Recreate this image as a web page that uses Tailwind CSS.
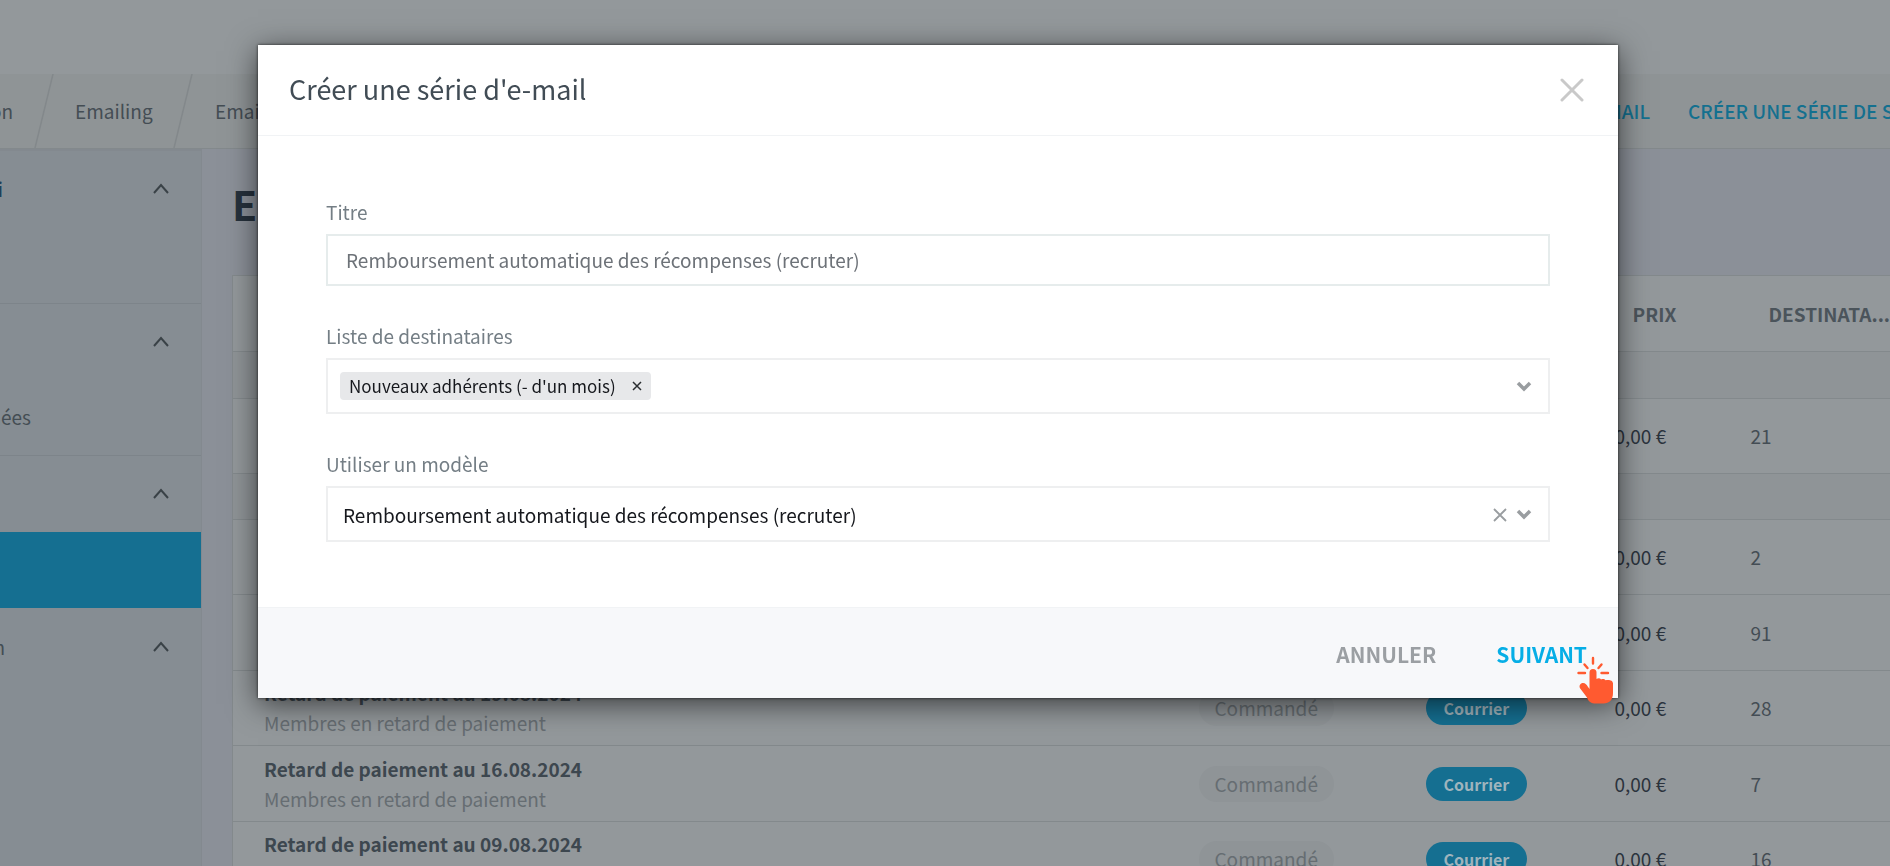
<!DOCTYPE html>
<html lang="fr">
<head>
<meta charset="utf-8">
<title>Créer une série d'e-mail</title>
<script src="https://cdn.jsdelivr.net/npm/@tailwindcss/browser@4"></script>
</head>
<body class="h-screen overflow-hidden bg-[#8b9098] font-['Noto_Sans_CJK_SC',sans-serif] text-[19px] text-[#444d54]">
<div class="flex h-screen flex-col overflow-hidden">
  <header class="h-[74px] shrink-0 bg-[#93989b]"></header>
  <nav class="flex h-[75px] shrink-0 items-stretch justify-between overflow-hidden border-b border-[#83898c] bg-[#8f9496] whitespace-nowrap" aria-label="Fil d'Ariane">
    <div class="flex items-center">
      <div class="flex w-[13px] justify-end overflow-hidden"><a href="#">Communication</a></div>
      <svg class="ml-[21px] h-[74px] w-5" viewBox="0 0 20 74" fill="none" stroke="#83888b" stroke-width="1.5"><path d="M19 0 1 74"/></svg>
      <a href="#" class="ml-[21px] w-[78px]">Emailing</a>
      <svg class="ml-5 h-[74px] w-5" viewBox="0 0 20 74" fill="none" stroke="#83888b" stroke-width="1.5"><path d="M19 0 1 74"/></svg>
      <a href="#" class="ml-[22px]">Emailing</a>
    </div>
    <div class="flex w-[340px] items-center justify-start gap-[38px] font-medium text-[#14708f]">
      <div class="flex w-[100px] shrink-0 justify-end"><a href="#">E-MAIL</a></div>
      <a href="#">CRÉER UNE SÉRIE DE SMS</a>
    </div>
  </nav>
  <div class="flex min-h-0 flex-1">
    <aside class="w-[202px] shrink-0 overflow-hidden border-t-2 border-r border-[#83898f] bg-[#868d93] whitespace-nowrap">
      <section class="h-[153px] border-b border-[#7d848a]">
        <button class="flex h-[76px] w-full items-center justify-between pr-8 font-medium text-[#1f3f58]"><span class="flex w-[3px] justify-end">Envoi</span>
          <svg class="h-4 w-4" viewBox="0 0 16 16" fill="none" stroke="#3a4247" stroke-width="2"><path d="m1 12 7-8 7 8"/></svg></button>
      </section>
      <section class="h-[152px] border-b border-[#7d848a]">
        <button class="flex h-[76px] w-full items-center justify-end pr-8" aria-label="Replier">
          <svg class="h-4 w-4" viewBox="0 0 16 16" fill="none" stroke="#3a4247" stroke-width="2"><path d="m1 12 7-8 7 8"/></svg></button>
        <a href="#" class="flex h-[75px] w-[31px] items-center justify-end">Données</a>
      </section>
      <section class="h-[153px]">
        <button class="flex h-[76px] w-full items-center justify-end pr-8" aria-label="Replier">
          <svg class="h-4 w-4" viewBox="0 0 16 16" fill="none" stroke="#3a4247" stroke-width="2"><path d="m1 12 7-8 7 8"/></svg></button>
        <a href="#" class="block h-[76px] bg-[#156f91]" aria-label="Emailing"></a>
      </section>
      <section>
        <button class="flex h-[76px] w-full items-center justify-between pr-8"><span class="flex w-[5px] justify-end">Configuration</span>
          <svg class="h-4 w-4" viewBox="0 0 16 16" fill="none" stroke="#3a4247" stroke-width="2"><path d="m1 12 7-8 7 8"/></svg></button>
      </section>
    </aside>
    <main class="min-w-0 flex-1 overflow-hidden pl-[30px]">
      <h1 class="flex h-[126px] items-center pb-4 text-[41px] font-bold text-[#26313c]">Emailing</h1>
      <table class="w-[calc(100%+40px)] table-fixed border-collapse border border-[#83898c] bg-[#93989b] text-left leading-[30px]">
        <colgroup><col><col class="w-[227px]"><col class="w-[189px]"><col class="w-[136px]"><col class="w-[211px]"></colgroup>
        <thead>
          <tr class="h-[76px] border-b border-[#83898c] text-[#4b545b]"><th></th><th></th><th></th><th class="pl-[50px] font-bold">PRIX</th><th class="pl-[50px] font-bold">DESTINATA...</th></tr>
        </thead>
        <tbody>
          <tr class="h-[47px] border-b border-[#83898c] bg-[#8f9497]"><td colspan="5"></td></tr>
          <tr class="h-[75px] border-b border-[#83898c]"><td></td><td></td><td></td><td class="pl-8 text-[#2b333d]">0,00 €</td><td class="pl-8">21</td></tr>
          <tr class="h-[46px] border-b border-[#83898c] bg-[#8f9497]"><td colspan="5"></td></tr>
          <tr class="h-[75px] border-b border-[#83898c]"><td></td><td></td><td></td><td class="pl-8 text-[#2b333d]">0,00 €</td><td class="pl-8">2</td></tr>
          <tr class="h-[76px] border-b border-[#83898c]"><td></td><td></td><td></td><td class="pl-8 text-[#2b333d]">0,00 €</td><td class="pl-8">91</td></tr>
          <tr class="h-[75px] border-b border-[#83898c]">
            <td class="pl-[31px]"><div class="font-bold text-[#3d474f]">Retard de paiement au 19.08.2024</div><div class="text-[#666d72]">Membres en retard de paiement</div></td>
            <td class="pl-8"><span class="inline-block rounded-full bg-[#8f9497] px-4 py-[3px] text-[#666d72]">Commandé</span></td>
            <td class="pl-8"><span class="inline-flex h-[34px] items-center rounded-full bg-[#156f91] px-[18px] text-base font-bold text-[#9fb4bd]">Courrier</span></td>
            <td class="pl-8 text-[#2b333d]">0,00 €</td><td class="pl-8">28</td></tr>
          <tr class="h-[76px] border-b border-[#83898c]">
            <td class="pl-[31px]"><div class="font-bold text-[#3d474f]">Retard de paiement au 16.08.2024</div><div class="text-[#666d72]">Membres en retard de paiement</div></td>
            <td class="pl-8"><span class="inline-block rounded-full bg-[#8f9497] px-4 py-[3px] text-[#666d72]">Commandé</span></td>
            <td class="pl-8"><span class="inline-flex h-[34px] items-center rounded-full bg-[#156f91] px-[18px] text-base font-bold text-[#9fb4bd]">Courrier</span></td>
            <td class="pl-8 text-[#2b333d]">0,00 €</td><td class="pl-8">7</td></tr>
          <tr class="h-[75px] border-b border-[#83898c]">
            <td class="pl-[31px]"><div class="font-bold text-[#3d474f]">Retard de paiement au 09.08.2024</div><div class="text-[#666d72]">Membres en retard de paiement</div></td>
            <td class="pl-8"><span class="inline-block rounded-full bg-[#8f9497] px-4 py-[3px] text-[#666d72]">Commandé</span></td>
            <td class="pl-8"><span class="inline-flex h-[34px] items-center rounded-full bg-[#156f91] px-[18px] text-base font-bold text-[#9fb4bd]">Courrier</span></td>
            <td class="pl-8 text-[#2b333d]">0,00 €</td><td class="pl-8">16</td></tr>
        </tbody>
      </table>
    </main>
  </div>
</div>

<div class="fixed inset-0 flex items-start justify-center pt-[45px] pr-[14px]">
  <form role="dialog" aria-labelledby="dialog-title" class="relative w-full max-w-[1360px] bg-white shadow-[0_6px_28px_rgba(0,0,0,0.6),0_0_3px_rgba(0,0,0,0.7)]">
    <div class="flex h-[91px] items-center justify-between border-b border-[#f1f3f5] pr-[34px] pl-[31px]">
      <h2 id="dialog-title" class="pb-0.5 text-[27px] leading-8 text-[#414c55]">Créer une série d'e-mail</h2>
      <button type="button" aria-label="Fermer"><svg class="h-6 w-6" viewBox="0 0 24 24" fill="none" stroke="#c9c9c9" stroke-width="3" stroke-linecap="round"><path d="m2 2 20 20M22 2 2 22"/></svg></button>
    </div>
    <div class="flex flex-col gap-[35px] px-[68px] pt-[61px] pb-[65px]">
      <div>
        <label for="titre" class="mb-[7px] block leading-[30px] text-[#747e85]">Titre</label>
        <input id="titre" type="text" value="Remboursement automatique des récompenses (recruter)" class="block h-[52px] w-full border-2 border-[#e6ecec] px-[18px] pb-0.5 text-[#6d7278] outline-none">
      </div>
      <div>
        <label for="liste" class="mb-[7px] block leading-[30px] text-[#747e85]">Liste de destinataires</label>
        <div class="flex h-14 items-center justify-between border-2 border-[#eeeff0] pr-4 pl-3">
          <span class="flex h-7 items-center gap-[15px] rounded-sm bg-[#e7e8ea] pr-2 pl-[9px] text-[17px] text-[#16181d]">Nouveaux adhérents (- d'un mois)
            <button type="button" aria-label="Retirer"><svg class="h-3 w-3" viewBox="0 0 12 12" fill="none" stroke="#2a2d30" stroke-width="1.5"><path d="m2 2 8 8M10 2l-8 8"/></svg></button></span>
          <button type="button" id="liste" aria-label="Ouvrir la liste"><svg class="h-4 w-4" viewBox="0 0 16 16" fill="none" stroke="#999da0" stroke-width="3.500"><path d="m2 5 6 6 6-6"/></svg></button>
        </div>
      </div>
      <div>
        <label for="modele" class="mb-[7px] block leading-[30px] text-[#747e85]">Utiliser un modèle</label>
        <div class="flex h-14 items-center border-2 border-[#eeeff0] pt-0.5 pr-4">
          <select id="modele" class="h-full min-w-0 flex-1 appearance-none bg-transparent pl-[15px] text-[#16181d] outline-none"><option>Remboursement automatique des récompenses (recruter)</option></select>
          <button type="button" aria-label="Effacer"><svg class="mr-2 h-4 w-4" viewBox="0 0 16 16" fill="none" stroke="#999da0" stroke-width="1.800"><path d="m2 2 12 12M14 2 2 14"/></svg></button>
          <svg class="h-4 w-4" viewBox="0 0 16 16" fill="none" stroke="#999da0" stroke-width="3.500"><path d="m2 4 6 6 6-6"/></svg>
        </div>
      </div>
    </div>
    <div class="flex h-[91px] items-center justify-end gap-[60px] border-t border-[#f1f3f5] bg-[#f7f8fa] pt-1 pr-[31px] text-[21px] font-bold">
      <button type="button" class="text-[#9b9fa3]">ANNULER</button>
      <button type="submit" class="text-[#06aee6]">SUIVANT</button>
    </div>
    <svg class="absolute right-[5px] -bottom-1.5 h-12 w-9" viewBox="0 0 36 48" fill="none" stroke="#ff5a30" stroke-width="2.4" stroke-linecap="round">
      <path d="M16 2v5.500M7.500 8.500l3 3.500M24.500 8.500l-3 3.500M1.500 17h6.500M24.500 17h6.500"/>
      <path fill="#ff5a30" stroke="none" d="M12.500 16.500a3.500 3.500 0 0 1 7 0V23c1.500-1.200 3.600-1 4.600.4 1.500-.8 3.500-.6 4.500.9 3-1 7.400-.2 7.400 3.200V37c0 7-4 10.500-9.500 10.500h-7.500c-5 0-7.500-2-9-6L3.200 32.500C1.500 29.500 3.500 27 6 27c2.500 0 3.800 2 4.700 3.600l1.800 2.400z"/>
    </svg>
  </form>
</div>
</body>
</html>
